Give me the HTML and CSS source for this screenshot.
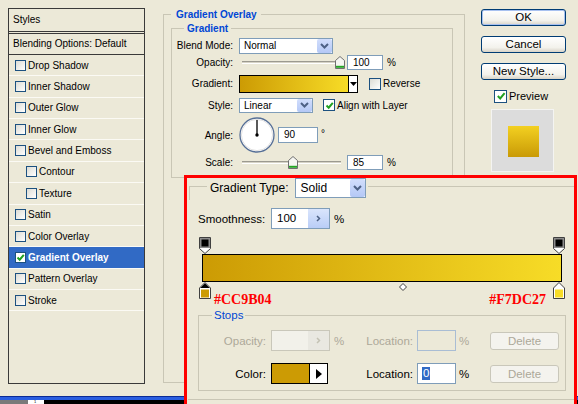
FILE: index.html
```html
<!DOCTYPE html>
<html>
<head>
<meta charset="utf-8">
<title>Layer Style</title>
<link rel="stylesheet" href="styles.css">
</head>
<body>
<div class="screen">
  <div class="dialog">
    <div class="styles-panel">
      <div class="panel-head">Styles</div>
      <div class="panel-blend">Blending Options: Default</div>
      <div class="panel-row"><span class="cb"></span>Drop Shadow</div>
      <div class="panel-row"><span class="cb"></span>Inner Shadow</div>
      <div class="panel-row"><span class="cb"></span>Outer Glow</div>
      <div class="panel-row"><span class="cb"></span>Inner Glow</div>
      <div class="panel-row"><span class="cb"></span>Bevel and Emboss</div>
      <div class="panel-row sub"><span class="cb"></span>Contour</div>
      <div class="panel-row sub"><span class="cb"></span>Texture</div>
      <div class="panel-row"><span class="cb"></span>Satin</div>
      <div class="panel-row"><span class="cb"></span>Color Overlay</div>
      <div class="panel-row sel"><span class="cb on"><svg width="9" height="9" viewBox="0 0 9 9"><path d="M1.5 4.5 L3.7 6.7 L7.8 1.8" fill="none" stroke="#21a121" stroke-width="2"/></svg></span>Gradient Overlay</div>
      <div class="panel-row"><span class="cb"></span>Pattern Overlay</div>
      <div class="panel-row"><span class="cb"></span>Stroke</div>
    </div>

    <fieldset class="group-outer">
      <legend>Gradient Overlay</legend>
      <fieldset class="group-inner">
        <legend>Gradient</legend>
        <div class="frow r1">
          <span class="flabel">Blend Mode:</span>
          <div class="select w-blend"><span class="sel-text">Normal</span><span class="sel-btn"><svg width="11" height="8" viewBox="0 0 11 8"><path d="M2 2 L5.5 5.5 L9 2" fill="none" stroke="#4d6185" stroke-width="2"/></svg></span></div>
        </div>
        <div class="frow r2">
          <span class="flabel">Opacity:</span>
          <div class="slider"><div class="track"></div><span class="thumb" style="left:96px"><svg width="10" height="13" viewBox="0 0 10 13"><path d="M5 0.5 L9.5 4.5 V12.5 H0.5 V4.5 Z" fill="#f6f6f2" stroke="#707070"/><path d="M1 10.8 H9" stroke="#25a525" stroke-width="2"/></svg></span></div>
          <div class="field w-num">100</div>
          <span class="unit">%</span>
        </div>
        <div class="frow r3">
          <span class="flabel">Gradient:</span>
          <div class="grad-pick"><span class="grad-fill"></span><span class="grad-arrow"><svg width="7" height="4" viewBox="0 0 7 4"><path d="M0 0 H7 L3.5 4 Z" fill="#000"/></svg></span></div>
          <span class="cb big gap-rev"></span><span class="cb-text">Reverse</span>
        </div>
        <div class="frow r4">
          <span class="flabel">Style:</span>
          <div class="select w-style"><span class="sel-text">Linear</span><span class="sel-btn"><svg width="11" height="8" viewBox="0 0 11 8"><path d="M2 2 L5.5 5.5 L9 2" fill="none" stroke="#4d6185" stroke-width="2"/></svg></span></div>
          <span class="cb big on gap-align"><svg width="9" height="9" viewBox="0 0 9 9"><path d="M1.5 4.5 L3.7 6.7 L7.8 1.8" fill="none" stroke="#21a121" stroke-width="2"/></svg></span><span class="cb-text">Align with Layer</span>
        </div>
        <div class="frow r5">
          <span class="flabel">Angle:</span>
          <svg class="dial" width="36" height="36" viewBox="0 0 36 36"><circle cx="18" cy="18" r="17" fill="#fff" stroke="#566f96" stroke-width="1.3"/><circle cx="18" cy="18" r="15.6" fill="none" stroke="#e2e2e2"/><line x1="18" y1="18" x2="18" y2="3" stroke="#000" stroke-width="1.3"/><circle cx="18" cy="18" r="1.7" fill="#000"/></svg>
          <div class="field w-angle">90</div>
          <span class="deg">°</span>
        </div>
        <div class="frow r6">
          <span class="flabel">Scale:</span>
          <div class="slider"><div class="track"></div><span class="thumb" style="left:49px"><svg width="10" height="13" viewBox="0 0 10 13"><path d="M5 0.5 L9.5 4.5 V12.5 H0.5 V4.5 Z" fill="#f6f6f2" stroke="#707070"/><path d="M1 10.8 H9" stroke="#25a525" stroke-width="2"/></svg></span></div>
          <div class="field w-num">85</div>
          <span class="unit">%</span>
        </div>
      </fieldset>
    </fieldset>

    <div class="side">
      <button class="btn default">OK</button>
      <button class="btn">Cancel</button>
      <button class="btn">New Style...</button>
      <div class="preview-row"><span class="cb prev on"><svg width="10" height="10" viewBox="0 0 10 10"><path d="M1.8 5 L4.2 7.4 L8.6 2.2" fill="none" stroke="#21a121" stroke-width="2"/></svg></span><span class="cb-text">Preview</span></div>
      <div class="preview-box"><div class="preview-swatch"></div></div>
    </div>
  </div>

  <div class="taskbar">
    <div class="tb-blue"></div>
    <div class="tb-row"><span class="tb-grey"></span><span class="tb-num">1</span></div>
  </div>

  <div class="editor">
    <div class="type-row">
      <span class="rule-start"></span>
      <span class="type-label">Gradient Type:</span>
      <div class="select w-solid"><span class="sel-text">Solid</span><span class="sel-btn tall"><svg width="11" height="8" viewBox="0 0 11 8"><path d="M2 2 L5.5 5.5 L9 2" fill="none" stroke="#4d6185" stroke-width="2"/></svg></span></div>
      <span class="rule-end"></span>
    </div>
    <div class="smooth-row">
      <span class="smooth-label">Smoothness:</span>
      <div class="spin"><span class="spin-val">100</span><span class="spin-btn"><svg width="5" height="7" viewBox="0 0 5 7"><path d="M1 1 L3.5 3.5 L1 6" fill="none" stroke="#4d6185" stroke-width="1.5"/></svg></span></div>
      <span class="pct">%</span>
    </div>
    <div class="ramp">
      <div class="bar"></div>
      <span class="stop top-left"><svg width="12" height="17" viewBox="0 0 12 17"><path d="M0.5 0.5 H11.5 V11.5 L6 16.5 L0.5 11.5 Z" fill="#fff" stroke="#404040"/><rect x="1" y="1" width="10" height="10" fill="#8c8c8c"/><rect x="2.5" y="2.5" width="7" height="7" fill="#000"/></svg></span>
      <span class="stop top-right"><svg width="12" height="17" viewBox="0 0 12 17"><path d="M0.5 0.5 H11.5 V11.5 L6 16.5 L0.5 11.5 Z" fill="#fff" stroke="#404040"/><rect x="1" y="1" width="10" height="10" fill="#8c8c8c"/><rect x="2.5" y="2.5" width="7" height="7" fill="#000"/></svg></span>
      <span class="stop bottom-left"><svg width="12" height="17" viewBox="0 0 12 17"><path d="M6 0.5 L11.5 6 V16.5 H0.5 V6 Z" fill="#fff" stroke="#404040"/><path d="M6 1.2 L10.8 6 H1.2 Z" fill="#000"/><rect x="2" y="7.5" width="8" height="8" fill="#cc9b04"/></svg></span>
      <span class="stop bottom-right"><svg width="12" height="17" viewBox="0 0 12 17"><path d="M6 0.5 L11.5 6 V16.5 H0.5 V6 Z" fill="#fff" stroke="#404040"/><rect x="2" y="7.5" width="8" height="8" fill="#f7dc27"/></svg></span>
      <span class="midpoint"><svg width="8" height="8" viewBox="0 0 8 8"><path d="M4 0.5 L7.5 4 L4 7.5 L0.5 4 Z" fill="#fff" stroke="#404040"/></svg></span>
    </div>
    <div class="hex-row"><span>#CC9B04</span><span>#F7DC27</span></div>
    <fieldset class="stops">
      <legend>Stops</legend>
      <div class="srow first">
        <span class="slabel off">Opacity:</span>
        <div class="spin disabled"><span class="spin-val"></span><span class="spin-btn"><svg width="5" height="7" viewBox="0 0 5 7"><path d="M1 1 L3.5 3.5 L1 6" fill="none" stroke="#c4c2b4" stroke-width="1.5"/></svg></span></div>
        <span class="pct off">%</span>
        <span class="loc-label off">Location:</span>
        <div class="loc-input disabled"></div>
        <span class="pct2 off">%</span>
        <button class="del">Delete</button>
      </div>
      <div class="srow second">
        <span class="slabel">Color:</span>
        <div class="swatch"><span class="sw-fill"></span><span class="sw-arrow"><svg width="6" height="10" viewBox="0 0 6 10"><path d="M0 0 L6 5 L0 10 Z" fill="#000"/></svg></span></div>
        <span class="pct-gap"></span>
        <span class="loc-label">Location:</span>
        <div class="loc-input"><span class="hl">0</span></div>
        <span class="pct2">%</span>
        <button class="del">Delete</button>
      </div>
    </fieldset>
    <div class="editor-foot"></div>
  </div>
</div>
</body>
</html>
```

FILE: styles.css
```css
* { box-sizing: border-box; }
html, body { margin: 0; padding: 0; }
body {
  background: #ece9d8;
  font-family: "Liberation Sans", Arial, sans-serif;
  font-size: 10px;
  color: #000;
}
.screen { position: relative; width: 578px; height: 404px; overflow: hidden; }

/* ---------- dialog ---------- */
.dialog { display: flex; align-items: flex-start; height: 396px; padding: 8px 0 0 8px; }

.styles-panel { width: 137px; height: 376px; border: 1px solid #3a3a3a; flex: none; }
.panel-head { height: 25px; line-height: 22px; padding-left: 4px; border-bottom: 3px double #3a3a3a; }
.panel-blend { height: 21px; line-height: 20px; padding-left: 4px; border-bottom: 1px solid #3a3a3a; }
.panel-row {
  height: 21.36px; display: flex; align-items: center; padding-left: 6px;
  border-bottom: 1px solid #fbfaf4;
}
.panel-row.sub { padding-left: 17px; }
.panel-row.sel { background: #316ac5; color: #fff; font-weight: bold; }

.cb {
  width: 11px; height: 11px; flex: none; margin-right: 2px;
  border: 1px solid #1c5180;
  background: linear-gradient(135deg, #dcdcd5, #ffffff);
  display: inline-flex; align-items: center; justify-content: center;
}
.cb.on { background: #fff; }
.cb.big { width: 12px; height: 12px; }
.cb.prev { width: 13px; height: 13px; }
.cb-text { white-space: nowrap; }

/* ---------- group boxes ---------- */
.group-outer {
  flex: none; min-width: 0; margin: 0 0 0 18px;
  width: 302px; height: 375px;
  padding: 1px 11px 0 7px;
  border: 1px solid #c9c6b5;
}
.group-outer > legend {
  padding: 0 4px 0 5px; font-weight: bold; color: #0046d5; line-height: 13px;
}
.group-inner {
  min-width: 0; margin: 0; height: 156px;
  padding: 2px 0 6px 4px;
  border: 1px solid #c9c6b5;
}
.group-inner > legend {
  margin-left: 8px; padding: 0 3px; font-weight: bold; color: #0046d5; line-height: 13px;
}

.frow { display: flex; align-items: center; }
.r1 { height: 17px; }
.r2 { height: 17px; }
.r3 { height: 21px; margin-top: 2px; }
.r4 { height: 18px; margin-top: 2px; }
.r5 { height: 38px; margin-top: 2px; }
.r6 { height: 16px; }
.flabel { width: 57px; margin-right: 6px; text-align: right; flex: none; }

.select {
  display: flex; align-items: center; flex: none;
  height: 16px; border: 1px solid #7f9db9; background: #fff;
}
.sel-text { padding-left: 4px; }
.sel-btn {
  margin-left: auto; width: 15px; height: 14px;
  border-radius: 2px;
  background: linear-gradient(#d2defc, #b4c8f6);
  display: flex; align-items: center; justify-content: center;
}
.sel-btn.tall { height: 18px; }
.w-blend { width: 94px; }
.w-style { width: 74px; height: 15px; }
.w-style .sel-btn { height: 13px; }

.slider { position: relative; width: 104px; height: 17px; padding: 7px 2px 0 3px; flex: none; }
.track { height: 3px; border-top: 1px solid #9c9a90; border-bottom: 1px solid #fff; background: #d6d3c6; }
.thumb { position: absolute; top: 2px; width: 10px; height: 13px; display: block; line-height: 0; }

.field {
  height: 15px; border: 1px solid #7f9db9; background: #fff;
  line-height: 13px; padding-left: 5px; flex: none;
}
.w-num { width: 36px; margin-left: 4px; }
.w-angle { width: 40px; height: 16px; margin-left: 3px; }
.unit { margin-left: 4px; }
.deg { margin-left: 3px; align-self: flex-start; margin-top: 12px; }

.grad-pick { display: flex; width: 119px; height: 18px; border: 1px solid #000; flex: none; }
.grad-fill { flex: 1; background: linear-gradient(90deg, #cc9b04, #f7dc27); }
.grad-arrow {
  width: 9px; border-left: 1px solid #000; background: #fff;
  display: flex; align-items: center; justify-content: center;
}
.gap-rev { margin-left: 11px; }
.gap-align { margin-left: 10px; }
.dial { flex: none; display: block; }

/* ---------- right column ---------- */
.side { flex: none; width: 85px; margin-left: 16px; padding-top: 1px; display: flex; flex-direction: column; }
.btn {
  height: 17px; margin: 0 0 10px; padding: 0;
  font-family: "Liberation Sans", Arial, sans-serif; font-size: 11.5px; line-height: 15px; color: #000;
  border: 1px solid #003c74; border-radius: 3px;
  background: linear-gradient(#ffffff, #f3f2ec 70%, #d8d3c7);
}
.btn.default { box-shadow: inset 0 0 0 1px #a8c1f0; }
.preview-row { display: flex; align-items: center; height: 16px; margin-top: -2px; padding-left: 13px; font-size: 11px; }
.preview-box {
  width: 63px; height: 63px; margin: 5px 0 0 10px;
  background: #dcdcdc; border: 1px solid #f4f4f2;
  padding: 16px 0 0 16px;
}
.preview-swatch { width: 31px; height: 31px; background: linear-gradient(#f3d021, #c99a06); }

/* ---------- taskbar strip ---------- */
.taskbar { height: 8px; }
.tb-blue { height: 4px; background: linear-gradient(#0b2b95 0, #0b2b95 1px, #2a5ee0 1px, #2a5ee0 100%); }
.tb-row { height: 4px; display: flex; background: #000; }
.tb-grey { width: 28px; background: #7a7a7a; }
.tb-num { width: 16px; background: #fff; font-size: 4px; line-height: 4px; padding-left: 6px; color: #000; }

/* ---------- gradient editor overlay ---------- */
.editor {
  position: absolute; left: 184px; top: 175px; width: 393px; height: 229px;
  border: 3px solid #ff0000; border-bottom: none;
  background: #ece9d8; font-size: 11.5px;
}
.type-row { display: flex; align-items: center; height: 20px; }
.rule-start {
  align-self: flex-start; flex: none; width: 18px; height: 14px;
  margin: 8px 3px 0 2px;
  border-top: 1px solid #c9c6b5; border-left: 1px solid #c9c6b5;
}
.type-label { font-size: 12px; margin-right: 6px; white-space: nowrap; }
.w-solid { width: 71px; height: 20px; font-size: 12px; }
.w-solid .sel-text { padding-left: 5px; }
.rule-end { align-self: flex-start; flex: 1; margin: 8px 0 0 2px; border-top: 1px solid #c9c6b5; }

.smooth-row { display: flex; align-items: center; height: 21px; margin-top: 10px; padding-left: 11px; }
.smooth-label { width: 68px; margin-right: 5px; white-space: nowrap; }
.spin { display: flex; width: 59px; height: 21px; border: 1px solid #7f9db9; background: #fff; flex: none; }
.spin-val { flex: 1; padding-left: 5px; line-height: 19px; }
.spin-btn {
  width: 21px; background: linear-gradient(#dae5fc, #b9cdf7);
  display: flex; align-items: center; justify-content: center;
}
.spin.disabled { border-color: #c9c7ba; background: #f2f1ea; }
.spin.disabled .spin-btn { background: #e9e8e1; }
.pct { margin-left: 4px; width: 14px; flex: none; }
.pct-gap { width: 20px; flex: none; }

.ramp { position: relative; width: 360px; margin: 8px 0 0 15px; padding: 17px 0 10px; }
.bar { height: 28px; border: 1px solid #000; background: linear-gradient(90deg, #cc9b04, #f7dc27); }
.stop { position: absolute; width: 12px; height: 17px; line-height: 0; }
.stop.top-left { left: -3px; top: 0; }
.stop.top-right { left: 351px; top: 0; }
.stop.bottom-left { left: -3px; top: 45px; }
.stop.bottom-right { left: 351px; top: 45px; }
.midpoint { position: absolute; left: 197px; top: 46px; width: 8px; height: 8px; line-height: 0; }

.hex-row {
  display: flex; justify-content: space-between;
  height: 16px; line-height: 16px; padding: 0 28px 0 27px;
  font: bold 14px "Liberation Serif", "Times New Roman", serif; color: #ff0000;
}

.stops {
  min-width: 0; margin: 0 8px 0 11px; padding: 0 0 6px 0;
  border: 1px solid #c9c6b5;
}
.stops > legend { margin-left: 13px; padding: 0 2px; color: #0046d5; line-height: 14px; }
.srow { display: flex; align-items: center; height: 21px; }
.srow.first { margin-top: 8px; }
.srow.second { margin-top: 12px; }
.slabel { width: 67px; margin-right: 5px; text-align: right; flex: none; }
.off { color: #aca899; }
.loc-label { width: 65px; margin-right: 4px; text-align: right; flex: none; }
.loc-input {
  width: 39px; height: 21px; flex: none;
  border: 1px solid #7f9db9; background: #fff;
  padding: 3px 0 0 4px; line-height: 13px;
}
.loc-input.disabled { background: #ece9d8; border-color: #a9bdd4; }
.hl { display: inline-block; background: #316ac5; color: #fff; padding: 0 1px; }
.pct2 { margin-left: 3px; width: 14px; flex: none; }
.del {
  margin-left: 17px; width: 69px; height: 18px; padding: 0;
  font-family: "Liberation Sans", Arial, sans-serif; font-size: 11.5px; color: #aca899;
  border: 1px solid #c9c7ba; border-radius: 3px; background: #f4f3ee;
}
.swatch { display: flex; width: 57px; height: 21px; border: 1px solid #000; flex: none; }
.sw-fill { width: 38px; background: #cc9b04; border-right: 1px solid #000; }
.sw-arrow { flex: 1; background: #fff; display: flex; align-items: center; justify-content: center; }
.editor-foot { margin: 8px 0 0 1px; border-top: 1px solid #c9c6b5; }
```
